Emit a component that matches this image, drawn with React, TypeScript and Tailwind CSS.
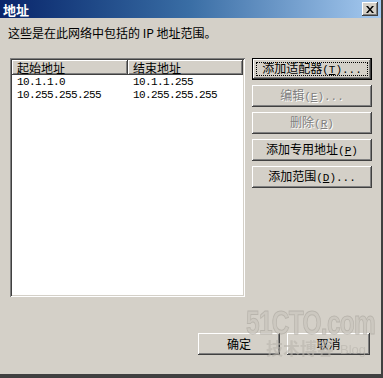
const font = { fontFamily: '"Noto Sans CJK SC", "Liberation Sans", sans-serif' }
const mono = { fontFamily: '"Liberation Mono", "Noto Sans CJK SC", monospace' }

const raised =
  "shadow-[inset_-1px_-1px_0_#404040,inset_1px_1px_0_#ffffff,inset_-2px_-2px_0_#808080,inset_2px_2px_0_#d4d0c8]"

function Btn({
  label,
  hot,
  tail = "",
  disabled = false,
  isDefault = false,
  className = "",
}: {
  label: string
  hot: string
  tail?: string
  disabled?: boolean
  isDefault?: boolean
  className?: string
}) {
  const text = (
    <span
      className={
        disabled
          ? "text-[#808080] [text-shadow:1px_1px_0_#ffffff]"
          : "text-black"
      }
    >
      {label}
      <span style={mono} className="text-[11px]">
        (<u>{hot}</u>){tail}
      </span>
    </span>
  )
  if (isDefault) {
    return (
      <div className={"h-[22px] border border-black " + className}>
        <div className={"h-full w-full p-[3px] " + raised}>
          <div className="flex h-full items-center justify-center border border-dotted border-black text-[12px] leading-none">
            {text}
          </div>
        </div>
      </div>
    )
  }
  return (
    <div
      className={
        "flex h-[22px] items-center justify-center text-[12px] leading-none " +
        raised +
        " " +
        className
      }
    >
      {text}
    </div>
  )
}

export default function App() {
  return (
    <div
      className="relative flex h-[378px] w-[383px] flex-col overflow-hidden bg-[#d4d0c8] border-r-2 border-b-4 border-[#404040]"
      style={font}
    >
      {/* title bar */}
      <div className="flex h-[18px] shrink-0 items-center justify-between bg-gradient-to-r from-[#0a246a] via-[#3a6ea5] to-[#a6caf0] pl-[3px] pr-[3px]">
        <span className="text-[13px] font-bold leading-none text-white">地址</span>
        <div
          className={
            "flex h-[14px] w-[16px] items-center justify-center bg-[#d4d0c8] " +
            raised
          }
        >
          <svg width="8" height="7" viewBox="0 0 8 7">
            <path d="M0 0h2l2 2.5L6 0h2L5 3.5 8 7H6L4 4.5 2 7H0l3-3.5z" fill="#000" />
          </svg>
        </div>
      </div>

      <div className="pl-[8px] pt-[8px] text-[12px] leading-[14px] text-black">
        这些是在此网络中包括的&nbsp;IP&nbsp;地址范围。
      </div>

      <div className="mt-[18px] flex pl-[10px]">
        {/* list */}
        <div className="h-[239px] w-[235px] bg-white p-[2px] shadow-[inset_1px_1px_0_#808080,inset_-1px_-1px_0_#ffffff,inset_2px_2px_0_#404040,inset_-2px_-2px_0_#d4d0c8]">
          <div className="flex h-[15px] text-[12px] leading-[15px] text-black">
            <div className={"w-[116px] bg-[#d4d0c8] pl-[5px] " + raised}>起始地址</div>
            <div className={"flex-1 bg-[#d4d0c8] pl-[5px] " + raised}>结束地址</div>
          </div>
          <div className="pt-[1px] text-[11px] leading-[13px] tracking-[-0.6px] text-black" style={mono}>
            <div className="flex">
              <span className="w-[116px] pl-[5px]">10.1.1.0</span>
              <span className="pl-[5px]">10.1.1.255</span>
            </div>
            <div className="flex">
              <span className="w-[116px] pl-[5px]">10.255.255.255</span>
              <span className="pl-[5px]">10.255.255.255</span>
            </div>
          </div>
        </div>

        {/* buttons */}
        <div className="ml-[7px] flex w-[120px] flex-col gap-[5px]">
          <Btn label="添加适配器" hot="T" tail="..." isDefault />
          <Btn label="编辑" hot="E" tail="..." disabled />
          <Btn label="删除" hot="R" disabled />
          <Btn label="添加专用地址" hot="P" />
          <Btn label="添加范围" hot="D" tail="..." />
        </div>
      </div>

      <div className="mt-[36px] flex justify-end gap-[7px] pr-[11px]">
        <div className={"flex h-[22px] w-[82px] items-center justify-center text-[12px] " + raised}>确定</div>
        <div className={"flex h-[22px] w-[83px] items-center justify-center text-[12px] " + raised}>取消</div>
      </div>

      {/* watermark */}
      <div className="pointer-events-none absolute left-[246px] top-[306px] flex flex-col items-start opacity-60">
        <span
          className="text-[34px] font-bold leading-[32px] tracking-[-1px] text-[#c8c4bc] [-webkit-text-stroke:1px_#a8a49c]"
          style={{ fontFamily: '"Liberation Sans", sans-serif', transform: "scaleX(0.72)", transformOrigin: "left" }}
        >
          51CTO.com
        </span>
        <div className="flex items-end gap-[6px] pl-[20px]">
          <span className="text-[17px] font-bold leading-[19px] text-[#b8b4ac]">技术博客</span>
          <span className="text-[13px] leading-[15px] text-[#b8b4ac]" style={{ fontFamily: '"Liberation Sans", sans-serif' }}>
            Blog
          </span>
        </div>
      </div>
    </div>
  )
}
